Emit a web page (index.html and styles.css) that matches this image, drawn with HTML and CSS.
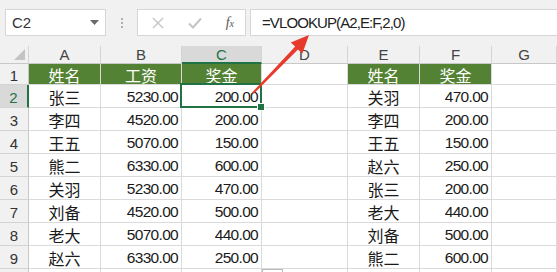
FILE: index.html
```html
<!DOCTYPE html>
<html lang="zh">
<head>
  <meta charset="UTF-8" />
  <title>VLOOKUP</title>
  <link rel="stylesheet" href="styles.css">
</head>
<body>
  <div class="app">
    <!-- barra della formula -->
    <div class="toolbar">
      <div class="namebox">
        <span>C2</span>
        <svg class="caret" width="9" height="5" viewBox="0 0 9 5"><path d="M0 0h9L4.5 5z" fill="#6a6a6a"/></svg>
      </div>
      <div class="grip"><i></i><i></i><i></i></div>
      <div class="fbtns">
        <svg width="12" height="12" viewBox="0 0 12 12"><path d="M1 1l10 10M11 1L1 11" stroke="#c4c4c4" stroke-width="1.4"/></svg>
        <svg width="14" height="12" viewBox="0 0 14 12"><path d="M1 6.5l4 4L13 1.5" stroke="#c4c4c4" stroke-width="2" fill="none"/></svg>
        <span class="fx">f<sub>x</sub></span>
      </div>
      <div class="finput">=VLOOKUP(A2,E:F,2,0)</div>
    </div>

    <!-- foglio -->
    <div class="sheet">
      <div class="ch corner"></div>
      <div class="ch">A</div><div class="ch">B</div><div class="ch active">C</div><div class="ch">D</div><div class="ch">E</div><div class="ch">F</div><div class="ch">G</div>

      <div class="rh">1</div>
      <div class="c hd">姓名</div><div class="c hd">工资</div><div class="c hd">奖金</div><div class="c"></div><div class="c hd">姓名</div><div class="c hd">奖金</div><div class="c"></div>

      <div class="rh active">2</div>
      <div class="c name">张三</div><div class="c num">5230.00</div><div class="c num sel">200.00</div><div class="c"></div><div class="c name">关羽</div><div class="c num">470.00</div><div class="c"></div>

      <div class="rh">3</div>
      <div class="c name">李四</div><div class="c num">4520.00</div><div class="c num">200.00</div><div class="c"></div><div class="c name">李四</div><div class="c num">200.00</div><div class="c"></div>

      <div class="rh">4</div>
      <div class="c name">王五</div><div class="c num">5070.00</div><div class="c num">150.00</div><div class="c"></div><div class="c name">王五</div><div class="c num">150.00</div><div class="c"></div>

      <div class="rh">5</div>
      <div class="c name">熊二</div><div class="c num">6330.00</div><div class="c num">600.00</div><div class="c"></div><div class="c name">赵六</div><div class="c num">250.00</div><div class="c"></div>

      <div class="rh">6</div>
      <div class="c name">关羽</div><div class="c num">5230.00</div><div class="c num">470.00</div><div class="c"></div><div class="c name">张三</div><div class="c num">200.00</div><div class="c"></div>

      <div class="rh">7</div>
      <div class="c name">刘备</div><div class="c num">4520.00</div><div class="c num">500.00</div><div class="c"></div><div class="c name">老大</div><div class="c num">440.00</div><div class="c"></div>

      <div class="rh">8</div>
      <div class="c name">老大</div><div class="c num">5070.00</div><div class="c num">440.00</div><div class="c"></div><div class="c name">刘备</div><div class="c num">500.00</div><div class="c"></div>

      <div class="rh">9</div>
      <div class="c name">赵六</div><div class="c num">6330.00</div><div class="c num">250.00</div><div class="c"></div><div class="c name">熊二</div><div class="c num">600.00</div><div class="c"></div>

      <div class="rh"></div>
      <div class="c"></div><div class="c"></div><div class="c"></div><div class="c"></div><div class="c"></div><div class="c"></div><div class="c"></div>
    </div>

    <!-- icona opzioni incolla -->
    <div class="paste"></div>

    <!-- freccia rossa -->
    <svg class="arrow" width="557" height="272" viewBox="0 0 557 272">
      <polygon points="252.3,92.3 295.2,46.6 290.8,42.5 309,35 302.4,53.5 298,49.4 253.7,93.7" fill="#e8392d"/>
    </svg>
  </div>
</body>
</html>
```

FILE: styles.css
```css
/* Reset */
* {
  box-sizing: border-box;
  margin: 0;
  padding: 0;
}
body {
  font-family: "Liberation Sans", "Noto Sans CJK SC", sans-serif;
  background: #fff;
  color: #222;
  width: 557px;
  height: 272px;
  overflow: hidden;
}
.app {
  position: relative;
  width: 557px;
  height: 272px;
  overflow: hidden;
}
/* Barra formula */
.toolbar {
  height: 46px;
  background: #f1f1f1;
  display: flex;
  align-items: flex-start;
  padding: 9px 0 0 5px;
}
.namebox {
  width: 101px;
  height: 27px;
  background: #fff;
  border: 1px solid #d6d6d6;
  display: flex;
  align-items: center;
  justify-content: space-between;
  padding: 0 6px 0 6px;
  font-size: 15px;
  color: #333;
}
.grip {
  width: 31px;
  height: 27px;
  display: flex;
  flex-direction: column;
  align-items: center;
  justify-content: center;
  gap: 2px;
}
.grip i {
  width: 2px;
  height: 2px;
  background: #b0b0b0;
}
.fbtns {
  width: 109px;
  height: 27px;
  background: #fff;
  border: 1px solid #d6d6d6;
  display: flex;
  align-items: center;
  justify-content: space-between;
  padding: 0 11px 0 14px;
}
.fx {
  font-family: "Liberation Serif", serif;
  font-style: italic;
  font-size: 14px;
  color: #555;
}
.fx sub {
  font-size: 10px;
  vertical-align: 0;
}
.finput {
  flex: 1;
  height: 27px;
  margin-left: 4px;
  background: #fff;
  border: 1px solid #d6d6d6;
  border-right: none;
  font-size: 15px;
  letter-spacing: -0.9px;
  line-height: 25px;
  padding-left: 11px;
  color: #222;
}
/* Foglio */
.sheet {
  display: grid;
  grid-template-columns: 29px 72px 81px 80px 86px 72px 72px 1fr;
  grid-template-rows: 18px 21px repeat(9, 23px);
}
.ch {
  background: #f1f1f1;
  border-right: 1px solid #d4d4d4;
  border-bottom: 1px solid #c8c8c8;
  font-size: 15px;
  color: #444;
  text-align: center;
  line-height: 18px;
}
.ch.active {
  background: #d9d9d9;
  border-bottom: 2px solid #217346;
  color: #217346;
}
.corner {
  position: relative;
}
.corner::after {
  content: "";
  position: absolute;
  right: 3px;
  bottom: 3px;
  border-left: 11px solid transparent;
  border-bottom: 11px solid #c4c4c4;
}
.rh {
  background: #f1f1f1;
  border-right: 1px solid #c8c8c8;
  border-bottom: 1px solid #d4d4d4;
  font-size: 15px;
  color: #333;
  display: flex;
  align-items: center;
  justify-content: center;
  padding-top: 2px;
}
.rh.active {
  background: #d9d9d9;
  border-right: 2px solid #217346;
  color: #217346;
}
.c {
  border-right: 1px solid #dadada;
  border-bottom: 1px solid #dadada;
  font-size: 15px;
  display: flex;
  align-items: center;
  padding-top: 1px;
}
.hd {
  background: #548235;
  color: #fff;
  justify-content: center;
  font-size: 16px;
}
.name {
  justify-content: center;
  font-size: 16px;
  color: #1a1a1a;
}
.num {
  justify-content: flex-end;
  padding-right: 3px;
  font-size: 15.5px;
  letter-spacing: -0.7px;
  color: #1a1a1a;
}
/* Cella selezionata */
.sel {
  position: relative;
}
.sel::before {
  content: "";
  position: absolute;
  left: -2px;
  top: -2px;
  right: -1px;
  bottom: -1px;
  border: 2px solid #217346;
}
.sel::after {
  content: "";
  position: absolute;
  right: -4px;
  bottom: -4px;
  width: 6px;
  height: 6px;
  background: #217346;
  border: 1px solid #fff;
}
.paste {
  position: absolute;
  left: 262px;
  top: 269px;
  width: 21px;
  height: 8px;
  border: 1px solid #b8b8b8;
  background: #fff;
}
.arrow {
  position: absolute;
  left: 0;
  top: 0;
  pointer-events: none;
}
```
